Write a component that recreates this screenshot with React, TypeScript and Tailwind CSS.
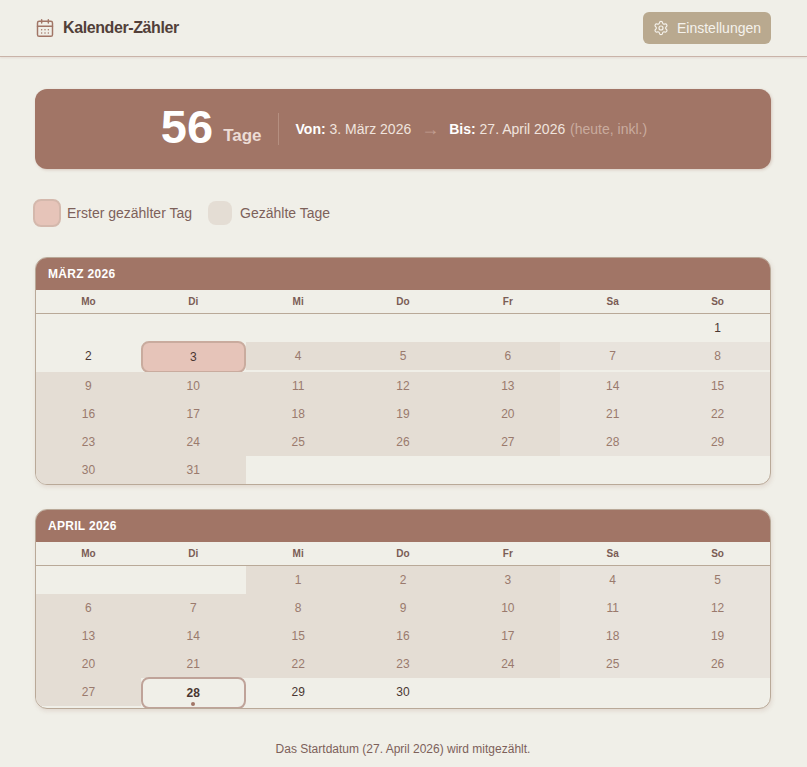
import { CalendarDays, Settings } from "lucide-react";

type Day = { n: number; kind: "plain" | "counted" | "first" | "today" };

const WEEKDAYS = ["Mo", "Di", "Mi", "Do", "Fr", "Sa", "So"];

const range = (from: number, to: number, kind: Day["kind"]): Day[] =>
  Array.from({ length: to - from + 1 }, (_, i) => ({ n: from + i, kind }));

const march: Day[] = [
  ...range(1, 2, "plain"),
  { n: 3, kind: "first" },
  ...range(4, 31, "counted"),
];

const april: Day[] = [
  ...range(1, 27, "counted"),
  { n: 28, kind: "today" },
  ...range(29, 30, "plain"),
];

const DayCell = ({ day, weekend }: { day: Day; weekend: boolean }) => {
  if (day.kind === "first") {
    return (
      <div className="h-[32px] -my-px flex items-center justify-center rounded-lg border-2 border-[#c9ab9e] bg-[#e6c4b9] text-[#4a3732]">
        {day.n}
      </div>
    );
  }
  if (day.kind === "today") {
    return (
      <div className="relative h-[32px] -my-px flex items-center justify-center rounded-lg border-2 border-[#bfa399] bg-[#f0efe8] font-bold text-[#4a3732]">
        {day.n}
        <span className="absolute bottom-[1px] left-1/2 -translate-x-1/2 w-1 h-1 rounded-full bg-[#a17566]" />
      </div>
    );
  }
  if (day.kind === "counted") {
    return (
      <div
        className={
          weekend
            ? "h-7 flex items-center justify-center bg-[#e8e3dc] text-[#9a7a6d]"
            : "h-7 flex items-center justify-center bg-[#e4ddd4] text-[#9a7a6d]"
        }
      >
        {day.n}
      </div>
    );
  }
  return (
    <div className="h-7 flex items-center justify-center text-[#4a3732]">
      {day.n}
    </div>
  );
};

const Month = ({
  title,
  offset,
  days,
}: {
  title: string;
  offset: number;
  days: Day[];
}) => (
  <section className="rounded-xl border border-[#b9a998] overflow-hidden bg-[#f0efe8] shadow-[1px_2px_4px_rgba(160,116,100,0.18)]">
    <h2 className="h-8 flex items-center px-3 bg-[#a17566] text-white text-xs font-bold tracking-[0.3px]">
      {title}
    </h2>
    <div className="grid grid-cols-7 h-6 border-b border-[#b9a998]">
      {WEEKDAYS.map((d) => (
        <div
          key={d}
          className="flex items-center justify-center text-[10px] font-bold text-[#7a5c55]"
        >
          {d}
        </div>
      ))}
    </div>
    <div className="grid grid-cols-7 items-start text-xs">
      {Array.from({ length: offset }, (_, i) => (
        <div key={i} className="h-7" />
      ))}
      {days.map((day, i) => (
        <DayCell key={day.n} day={day} weekend={(offset + i) % 7 >= 5} />
      ))}
    </div>
  </section>
);

export default function App() {
  return (
    <div className="min-h-[767px] bg-[#f0efe8] font-['Liberation_Sans',Arial,sans-serif]">
      <header className="h-[57px] pl-[35px] pr-[36px] flex items-center justify-between border-b border-[#c9b3a8] shadow-[0_1px_2px_rgba(160,116,100,0.15)]">
        <div className="flex items-center gap-[8px]">
          <CalendarDays className="w-5 h-5 text-[#a17566]" strokeWidth={1.75} />
          <h1 className="text-base font-bold text-[#523f39] tracking-[-0.4px]">Kalender-Zähler</h1>
        </div>
        <button className="h-8 w-[128px] flex items-center justify-center gap-2 rounded-md bg-[#b9a98f] text-sm text-[#f5f2ec]">
          <Settings className="w-4 h-4" strokeWidth={1.75} />
          Einstellungen
        </button>
      </header>

      <main className="pl-[35px] pr-[36px] pt-8">
        <div className="h-20 pl-[2px] flex items-center justify-center rounded-xl bg-[#a17566] shadow-[1px_1px_3px_rgba(160,116,100,0.3)]">
          <div className="flex items-baseline gap-[10px] mb-1">
            <span className="text-[47px] leading-none font-bold text-white">56</span>
            <span className="relative -top-0.5 text-[17px] font-bold text-[#ecdcd5]">Tage</span>
          </div>
          <span className="w-px h-8 ml-4 mr-[17px] bg-[#b58f80]" />
          <div className="flex items-center text-sm text-[#f0e4de]">
            <span>
              <b className="font-bold text-white">Von:</b> 3. März 2026
            </span>
            <span className="mx-[10px] text-lg leading-none text-[#c19f92]">→</span>
            <span>
              <b className="font-bold text-white">Bis:</b> 27. April 2026{" "}
              <span className="ml-px text-[#c9ab9e]">(heute, inkl.)</span>
            </span>
          </div>
        </div>

        <div className="mt-[30px] flex items-center text-sm text-[#7d615a]">
          <span className="w-7 h-7 -ml-[2px] rounded-lg border-2 border-[#d4b8ac] bg-[#e6c4b9]" />
          <span className="ml-[6px]">Erster gezählter Tag</span>
          <span className="ml-4 w-6 h-6 rounded-lg bg-[#e4ddd4]" />
          <span className="ml-2">Gezählte Tage</span>
        </div>

        <div className="mt-[30px] flex flex-col gap-6">
          <Month title="MÄRZ 2026" offset={6} days={march} />
          <Month title="APRIL 2026" offset={2} days={april} />
        </div>

        <p className="mt-8 text-center text-xs text-[#7d615a]">
          Das Startdatum (27. April 2026) wird mitgezählt.
        </p>
      </main>
    </div>
  );
}
